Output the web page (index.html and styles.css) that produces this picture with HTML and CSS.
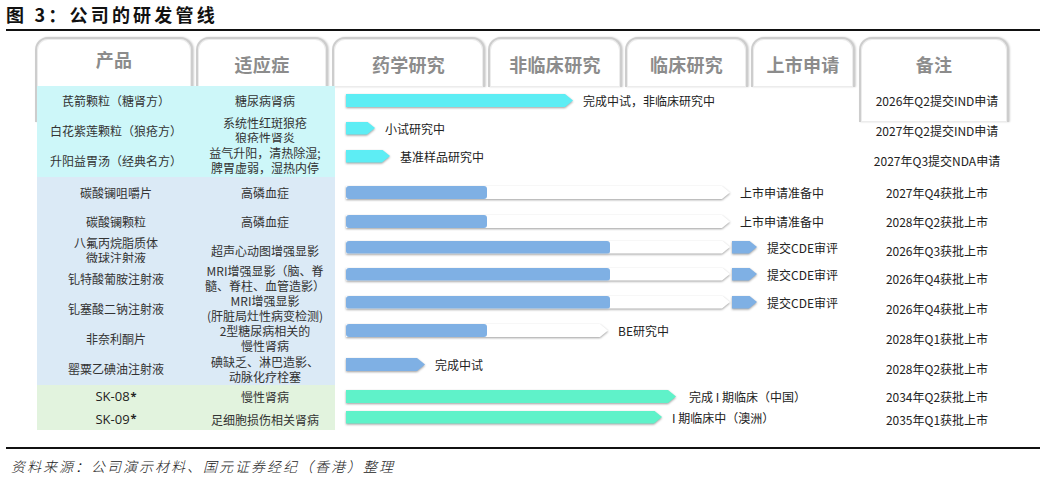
FILE: index.html
```html
<!DOCTYPE html>
<html lang="zh">
<head>
<meta charset="utf-8">
<link rel="stylesheet" href="styles.css">
</head>
<body>
<div class="page">
  <h1 class="title">图 3：公司的研发管线</h1>
  <div class="rule"></div>
  <div class="chart">
    <div class="tabs">
      <div class="tab tall w1 hi">产品</div>
      <div class="tab w2">适应症</div>
      <div class="tab w3">药学研究</div>
      <div class="tab w4">非临床研究</div>
      <div class="tab w5">临床研究</div>
      <div class="tab w6">上市申请</div>
      <div class="tab tall w7">备注</div>
    </div>
    <div class="rows">
      <div class="row cy h29">
        <div class="c prod">芪箭颗粒（糖肾方）</div>
        <div class="c ind">糖尿病肾病</div>
        <div class="c bars"><div class="sh"><div class="arrow cyan" style="width:227px"></div></div><span class="lbl">完成中试，非临床研究中</span></div>
        <div class="c note">2026年Q2提交IND申请</div>
      </div>
      <div class="row cy h28">
        <div class="c prod">白花紫莲颗粒（狼疮方）</div>
        <div class="c ind">系统性红斑狼疮<br>狼疮性肾炎</div>
        <div class="c bars up4"><div class="sh"><div class="arrow cyan" style="width:29px"></div></div><span class="lbl">小试研究中</span></div>
        <div class="c note">2027年Q2提交IND申请</div>
      </div>
      <div class="row cy h34">
        <div class="c prod">升阳益胃汤（经典名方）</div>
        <div class="c ind">益气升阳，清热除湿;<br>脾胃虚弱，湿热内停</div>
        <div class="c bars up8"><div class="sh"><div class="arrow cyan" style="width:44px"></div></div><span class="lbl">基准样品研究中</span></div>
        <div class="c note">2027年Q3提交NDA申请</div>
      </div>

      <div class="row bl h31">
        <div class="c prod">碳酸镧咀嚼片</div>
        <div class="c ind">高磷血症</div>
        <div class="c bars"><div class="sh"><div class="track arrow" style="width:384px"><div class="fill" style="width:141px"></div></div></div><span class="lbl">上市申请准备中</span></div>
        <div class="c note">2027年Q4获批上市</div>
      </div>
      <div class="row bl h27">
        <div class="c prod">碳酸镧颗粒</div>
        <div class="c ind">高磷血症</div>
        <div class="c bars"><div class="sh"><div class="track arrow" style="width:384px"><div class="fill" style="width:141px"></div></div></div><span class="lbl">上市申请准备中</span></div>
        <div class="c note">2028年Q2获批上市</div>
      </div>
      <div class="row bl h28">
        <div class="c prod">八氟丙烷脂质体<br>微球注射液</div>
        <div class="c ind">超声心动图增强显影</div>
        <div class="c bars up6"><div class="sh"><div class="track arrow" style="width:384px"><div class="fill" style="width:264px"></div></div></div><div class="sh tip"><div class="arrow blue" style="width:25px"></div></div><span class="lbl">提交CDE审评</span></div>
        <div class="c note">2026年Q3获批上市</div>
      </div>
      <div class="row bl h30">
        <div class="c prod">钆特酸葡胺注射液</div>
        <div class="c ind">MRI增强显影（脑、脊<br>髓、脊柱、血管造影）</div>
        <div class="c bars up8"><div class="sh"><div class="track arrow" style="width:384px"><div class="fill" style="width:264px"></div></div></div><div class="sh tip"><div class="arrow blue" style="width:25px"></div></div><span class="lbl">提交CDE审评</span></div>
        <div class="c note">2026年Q4获批上市</div>
      </div>
      <div class="row bl h30">
        <div class="c prod">钆塞酸二钠注射液</div>
        <div class="c ind">MRI增强显影<br>(肝脏局灶性病变检测)</div>
        <div class="c bars up12"><div class="sh"><div class="track arrow" style="width:384px"><div class="fill" style="width:264px"></div></div></div><div class="sh tip"><div class="arrow blue" style="width:25px"></div></div><span class="lbl">提交CDE审评</span></div>
        <div class="c note">2026年Q4获批上市</div>
      </div>
      <div class="row bl h29">
        <div class="c prod">非奈利酮片</div>
        <div class="c ind">2型糖尿病相关的<br>慢性肾病</div>
        <div class="c bars up15"><div class="sh"><div class="track arrow" style="width:262px"><div class="fill" style="width:141px"></div></div></div><span class="lbl">BE研究中</span></div>
        <div class="c note">2028年Q1获批上市</div>
      </div>
      <div class="row bl h33">
        <div class="c prod">罂粟乙碘油注射液</div>
        <div class="c ind">碘缺乏、淋巴造影、<br>动脉化疗栓塞</div>
        <div class="c bars up8"><div class="sh"><div class="arrow blue" style="width:79px"></div></div><span class="lbl">完成中试</span></div>
        <div class="c note">2028年Q2获批上市</div>
      </div>

      <div class="row gr h23">
        <div class="c prod lat">SK-08<sup>*</sup></div>
        <div class="c ind">慢性肾病</div>
        <div class="c bars"><div class="sh"><div class="arrow green" style="width:330px"></div></div><span class="lbl wide">完成 I 期临床（中国）</span></div>
        <div class="c note">2034年Q2获批上市</div>
      </div>
      <div class="row gr h22">
        <div class="c prod lat">SK-09<sup>*</sup></div>
        <div class="c ind">足细胞损伤相关肾病</div>
        <div class="c bars up4"><div class="sh"><div class="arrow green" style="width:316px"></div></div><span class="lbl">I 期临床中（澳洲）</span></div>
        <div class="c note">2035年Q1获批上市</div>
      </div>
    </div>
  </div>
  <div class="rule bottom"></div>
  <p class="source">资料来源：公司演示材料、国元证券经纪（香港）整理</p>
</div>
</body>
</html>
```

FILE: styles.css
```css
* { box-sizing: border-box; }
html, body { margin: 0; padding: 0; background: #fff; }
body { font-family: "Noto Sans CJK SC", "Noto Sans", sans-serif; color: #222; }
.page { width: 1046px; height: 479px; padding: 0 6px; overflow: hidden; }
.title {
  margin: 0; padding: 3px 0 0 0; height: 29px;
  font-size: 18px; font-weight: 700; line-height: 22px; letter-spacing: 3.2px; color: #111;
}
.rule { height: 2px; background: #111; width: 1034px; }
.chart { margin: 6px 0 0 31px; width: 973px; }
.tabs { display: flex; height: 50px; align-items: flex-start; }
.tab {
  height: 50px; flex: none;
  background: #fff;
  border: 2px solid #cdcdcd; border-bottom: 0;
  border-radius: 13px 13px 0 0;
  box-shadow: 1px 0 2px rgba(0,0,0,.18), inset 0 0 0 1px #ececec;
  color: #8c8c8c; font-weight: 700; font-size: 18px;
  text-align: center; line-height: 50px; letter-spacing: 0.3px;
}
.tab.hi { line-height: 41px; }
.tab.tall { height: 85px; }
.w1 { width: 158px; margin-left: -2px; }
.w2 { width: 132px; margin-left: 3px; }
.w3 { width: 153px; margin-left: 4px; }
.w4 { width: 134px; margin-left: 3px; }
.w5 { width: 123px; margin-left: 3px; }
.w6 { width: 104px; margin-left: 3px; }
.w7 { width: 150px; margin-left: 4px; }
.rows { margin-top: -1px; position: relative; }
.row { display: grid; grid-template-columns: 158px 140px 527px 148px; }
.h22 { height: 22px; } .h23 { height: 23px; } .h27 { height: 27px; } .h28 { height: 28px; }
.h29 { height: 29px; } .h30 { height: 30px; } .h31 { height: 31px; } .h33 { height: 33px; } .h34 { height: 34px; }
.c { display: flex; align-items: center; font-size: 12px; line-height: 15px; }
.prod, .ind { justify-content: center; text-align: center; color: #333; white-space: nowrap; }
.cy .prod, .cy .ind { background: #cdf7f9; }
.bl .prod, .bl .ind { background: #dbeaf6; }
.gr .prod, .gr .ind { background: #e2f3de; }
.lat { font-family: "Open Sans", "Noto Sans", sans-serif; font-size: 13px; color: #222; }
.lat sup { font-size: 11px; font-weight: 700; line-height: 0; position: relative; top: -1px; margin-left: 1px; }
.note { justify-content: center; color: #222; white-space: nowrap; padding-left: 2px; }
.bars { padding-left: 11px; }
.up4 { padding-bottom: 4px; } .up6 { padding-bottom: 6px; } .up8 { padding-bottom: 8px; }
.up12 { padding-bottom: 12px; } .up15 { padding-bottom: 15px; }
.sh { filter: drop-shadow(0 1.5px 0.8px rgba(0,0,0,.38)); flex: none; }
.arrow {
  height: 13px;
  clip-path: polygon(0 0, calc(100% - 8px) 0, 100% 50%, calc(100% - 8px) 100%, 0 100%);
}
.cyan { background: #5dedf4; }
.blue { background: #7fb0e4; }
.green { background: #5ff2c9; }
.track { background: #fff; display: flex; }
.fill { height: 13px; background: #7fb0e4; border-radius: 3px; }
.tip { margin-left: 2px; }
.lbl { margin-left: 10px; white-space: nowrap; color: #222; }
.lbl.wide { margin-left: 13px; }
.rule.bottom { margin-top: 17px; }
.source {
  margin: 8px 0 0 5px; font-size: 14px; line-height: 18px; letter-spacing: 2px;
  font-style: italic; color: #222; font-family: "Noto Sans CJK SC", serif; font-weight: 300;
}
```
